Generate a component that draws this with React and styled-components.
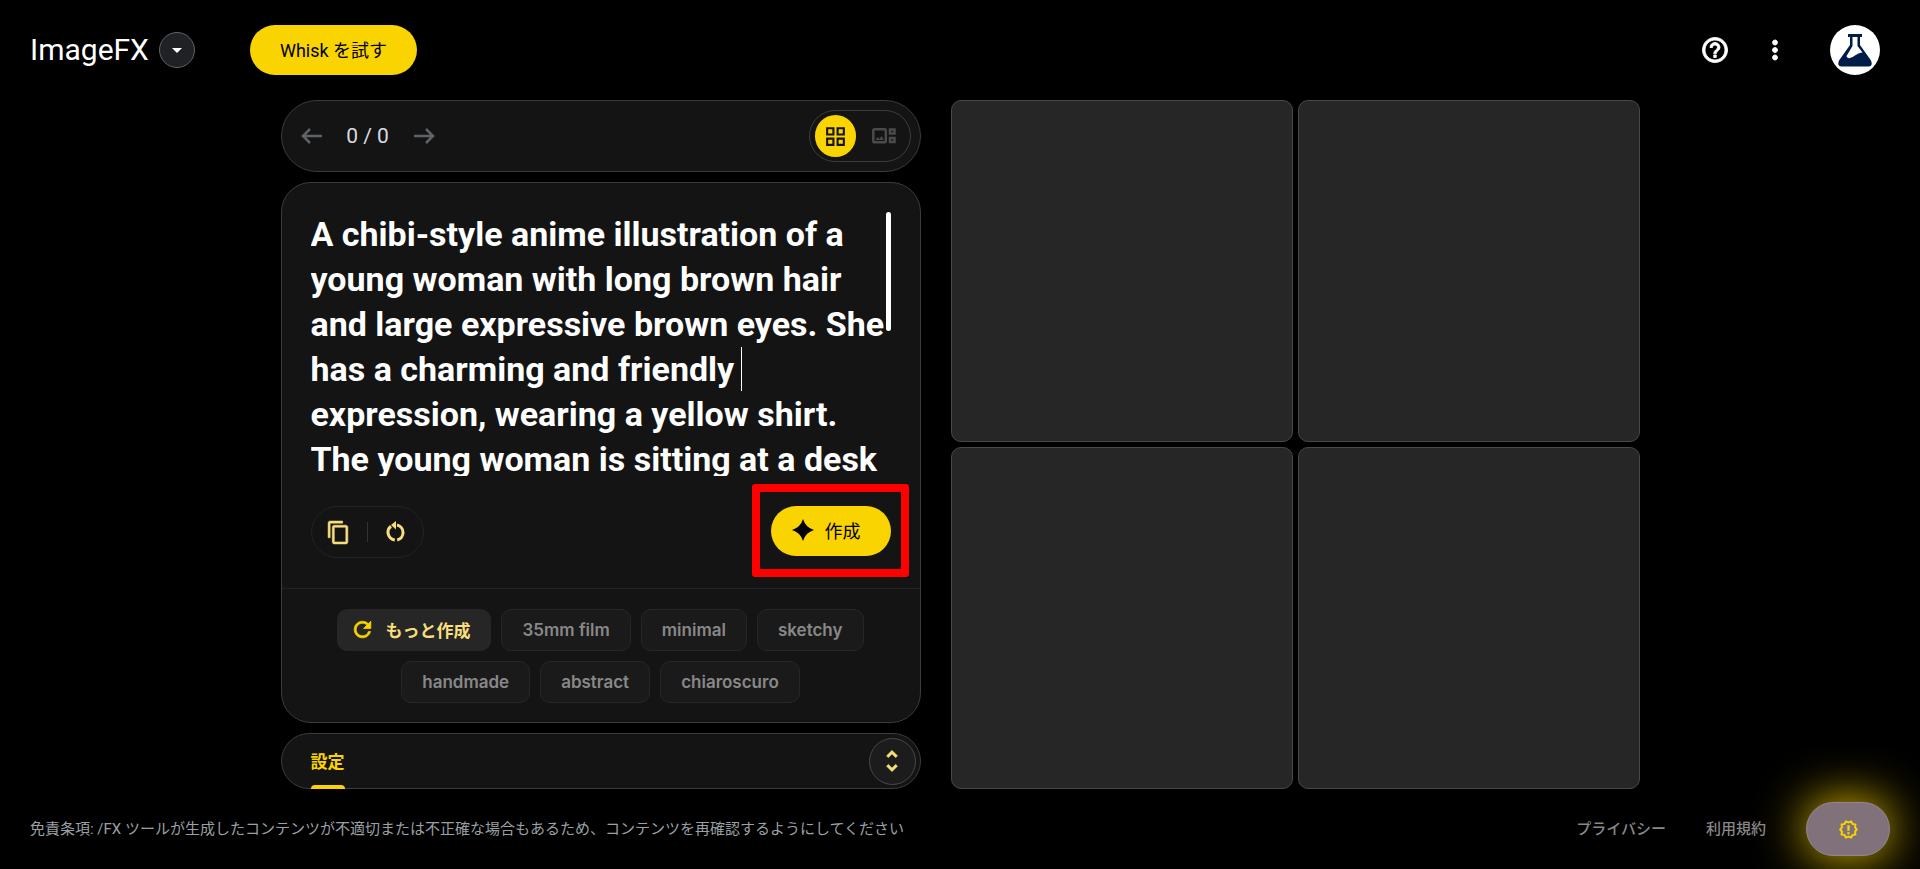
import React, { useState } from 'react';
import styled, { createGlobalStyle } from 'styled-components';
import {
  MdArrowDropDown,
  MdContentCopy,
  MdGridView,
  MdHelpOutline,
  MdMoreVert,
  MdRefresh,
  MdUnfoldMore,
} from 'react-icons/md';

const PROMPT = `A chibi-style anime illustration of a
young woman with long brown hair
and large expressive brown eyes. She
has a charming and friendly
expression, wearing a yellow shirt.
The young woman is sitting at a desk`;

const STYLES = ['35mm film', 'minimal', 'sketchy', 'handmade', 'abstract', 'chiaroscuro'];

const GlobalStyle = createGlobalStyle`
  * {
    box-sizing: border-box;
  }

  body {
    margin: 0;
    background-color: #000;
    color: #fff;
    font-family: Roboto, 'Noto Sans CJK JP', sans-serif;
  }

  button, textarea {
    font-family: inherit;
  }

  button {
    padding: 0;
    border: none;
    background: none;
    color: inherit;
    cursor: pointer;
  }

  path[fill='none'] {
    stroke: none;
  }
`;

const Page = styled.div`
  display: flex;
  flex-direction: column;
  min-height: 100vh;
`;

const Header = styled.header`
  display: flex;
  align-items: center;
  height: 100px;
  padding: 0 40px 0 30px;
`;

const Logo = styled.h1`
  margin: 0 10px 0 0;
  font-size: 30px;
  font-weight: 400;
  line-height: 36px;
`;

const ToolMenuButton = styled.button`
  display: flex;
  align-items: center;
  justify-content: center;
  width: 36px;
  height: 36px;
  margin-right: 55px;
  border: 1px solid #5f6368;
  border-radius: 50%;
  background-color: #202124;
`;

const PrimaryButton = styled.button`
  display: flex;
  align-items: center;
  gap: 11px;
  height: 50px;
  padding: ${props => (props.$withIcon ? '0 30px 2px 21px' : '0 30px 2px')};
  border-radius: 25px;
  background-color: #fad400;
  color: #000;
  font-size: 18px;
  font-weight: 400;
`;

const HeaderActions = styled.div`
  display: flex;
  align-items: center;
  gap: 30px;
  margin-left: auto;
`;

const IconButton = styled.button`
  display: flex;
  align-items: center;
  justify-content: center;
  width: 30px;
  height: 30px;
  color: ${props => props.$color || '#fff'};
`;

const Avatar = styled.button`
  width: 50px;
  height: 50px;
  margin-left: 10px;
  border-radius: 50%;
  background-color: #fff;
`;

const Workspace = styled.main`
  display: flex;
  flex: 1;
  justify-content: center;
  gap: 30px;
`;

const Editor = styled.section`
  display: flex;
  flex-direction: column;
  gap: 10px;
  flex: 0 1 640px;
`;

const Panel = styled.div`
  border: 1px solid #3c3c3c;
  border-radius: ${props => props.$radius};
  background-color: #141414;
`;

const Toolbar = styled(Panel)`
  display: flex;
  align-items: center;
  height: 72px;
  padding: 0 9px 0 15px;
`;

const ArrowButton = styled.button`
  display: flex;
  align-items: center;
  justify-content: center;
  width: 30px;
  height: 30px;
  color: #5f6368;
`;

const Counter = styled.span`
  width: 82px;
  color: #dadce0;
  font-size: 21px;
  text-align: center;
`;

const ViewToggle = styled.div`
  display: flex;
  align-items: center;
  gap: 8px;
  height: 52px;
  margin-left: auto;
  padding: 0 5px;
  border: 1px solid #3c3c3c;
  border-radius: 26px;
`;

const ViewButton = styled.button`
  display: flex;
  align-items: center;
  justify-content: center;
  width: 41px;
  height: 42px;
  border-radius: 21px;
  background-color: ${props => (props.$active ? '#fad400' : 'transparent')};
  color: ${props => (props.$active ? '#141414' : '#4a4a4a')};
`;

const PromptPanel = styled(Panel)`
  display: flex;
  flex: 1;
  flex-direction: column;
`;

const PromptArea = styled.div`
  position: relative;
  flex: 1;
  margin: 29px 29px 30px;
`;

const PromptInput = styled.textarea`
  display: block;
  width: 100%;
  height: 100%;
  min-height: 264px;
  padding: 0;
  border: none;
  outline: none;
  resize: none;
  overflow: hidden;
  background: none;
  color: #fff;
  font-size: 34px;
  font-weight: 700;
  line-height: 45px;
  white-space: pre;
`;

const ScrollThumb = styled.span`
  position: absolute;
  top: 0;
  right: 0;
  width: 5px;
  height: 45%;
  border-radius: 3px;
  background-color: #fff;
`;

const Caret = styled.span`
  position: absolute;
  top: 135px;
  left: 430px;
  width: 1px;
  height: 44px;
  background-color: #fff;
`;

const PromptActions = styled.div`
  display: flex;
  align-items: flex-start;
  justify-content: space-between;
  padding: 0 29px 30px;
`;

const EditTools = styled.div`
  display: flex;
  align-items: center;
  justify-content: space-between;
  width: 113px;
  height: 52px;
  padding: 0 12px;
  border: 1px solid #222;
  border-radius: 26px;
`;

const Separator = styled.span`
  width: 1px;
  height: 20px;
  background-color: #333;
`;

const Highlight = styled.div`
  position: relative;

  &::after {
    content: '';
    position: absolute;
    inset: -22px -18px -21px -19px;
    border: 8px solid #f00;
    border-radius: 3px;
    pointer-events: none;
  }
`;

const Suggestions = styled.div`
  display: flex;
  flex-wrap: wrap;
  justify-content: center;
  gap: 10px;
  padding: 20px 40px 19px;
  border-top: 1px solid #222;
`;

const Chip = styled.button`
  height: 42px;
  padding: 0 20px;
  border: 1px solid #262626;
  border-radius: 10px;
  background-color: #1a1a1a;
  color: #888;
  font-family: Inter, 'Noto Sans CJK JP', sans-serif;
  font-size: 17px;
  font-weight: 600;
`;

const MoreChip = styled(Chip)`
  display: flex;
  align-items: center;
  gap: 10px;
  padding: 0 20px 2px 12px;
  background-color: #262626;
  color: #f8df7b;
  font-weight: 700;

  svg {
    color: #fad400;
  }
`;

const SettingsBar = styled(Panel)`
  display: flex;
  align-items: center;
  justify-content: space-between;
  height: 56px;
  padding: 0 4px 0 29px;
`;

const SettingsTab = styled.button`
  position: relative;
  align-self: stretch;
  margin-bottom: -1px;
  padding-bottom: 3px;
  color: #fad400;
  font-size: 17px;
  font-weight: 700;

  &::after {
    content: '';
    position: absolute;
    right: 0;
    bottom: 0;
    left: 0;
    height: 4px;
    border-radius: 4px 4px 0 0;
    background-color: #fad400;
  }
`;

const ExpandButton = styled.button`
  display: flex;
  align-items: center;
  justify-content: center;
  width: 47px;
  height: 47px;
  border: 1px solid #484848;
  border-radius: 50%;
  background-color: #1c1c1c;
  color: #f8df7b;
`;

const ResultGrid = styled.section`
  display: grid;
  grid-template-columns: 1fr 1fr;
  grid-template-rows: 1fr 1fr;
  gap: 5px;
  flex: 0 1 689px;
`;

const ResultCell = styled.div`
  border: 1px solid #484848;
  border-radius: 10px;
  background-color: #262626;
`;

const Footer = styled.footer`
  display: flex;
  align-items: center;
  gap: 40px;
  height: 80px;
  padding: 0 30px;
  font-size: 15px;
`;

const Disclaimer = styled.p`
  margin: 0 auto 0 0;
  padding-bottom: 3px;
  color: #9aa0a6;
`;

const FooterLink = styled.a`
  padding-bottom: 3px;
  color: #888;
  font-weight: 500;
  text-decoration: none;
`;

const FeedbackButton = styled.button`
  display: flex;
  align-items: center;
  justify-content: center;
  width: 84px;
  height: 54px;
  border: 1px solid #958494;
  border-radius: 27px;
  background-color: #80717a;
  box-shadow: 0 0 50px #fad400;
  color: #fad400;
`;

const ArrowIcon = ({ forward }) => (
  <svg width="22" height="16" viewBox="0 0 22 16" fill="none" stroke="currentColor" strokeWidth="2.500" aria-hidden="true">
    <path d={forward ? 'M1 8h19M13 1l7 7-7 7' : 'M21 8H2M9 1L2 8l7 7'} stroke="currentColor" />
  </svg>
);

const FlaskIcon = () => (
  <svg width="50" height="50" viewBox="0 0 50 50" aria-hidden="true">
    <path d="M18 9h14v3h-2v8l11 15.500q2.500 6-3 6H12q-5.500 0-3-6L20 20v-8h-2z" fill="#001d4a" />
    <path d="M22.500 12h5v9l5 6.500c-5 .5-7 3-10 4.500-3 1.800-5.500 1.500-6-1L22.500 21z" fill="#fff" />
  </svg>
);

const ImageStripIcon = () => (
  <svg width="24" height="16" viewBox="0 0 24 16" fill="none" stroke="currentColor" strokeWidth="2.500" aria-hidden="true">
    <rect x="1.300" y="1.300" width="12.500" height="13" rx="1" />
    <rect x="18" y="1.500" width="4.500" height="4" />
    <rect x="18" y="10" width="4.500" height="4" />
    <path d="M3.500 12l2-3 2 2L9.500 8l2.500 4z" fill="currentColor" stroke="none" />
  </svg>
);

const ResetIcon = () => (
  <svg width="20" height="22" viewBox="0 0 20 22" fill="none" stroke="currentColor" aria-hidden="true">
    <g strokeWidth="3">
      <path d="M5 5.300A7.700 7.700 0 0 0 8.800 19M11.200 19A7.700 7.700 0 0 0 11 4" />
    </g>
    <path d="M10 0v8.500L5 4z" fill="currentColor" stroke="none" />
  </svg>
);

const SparkIcon = () => (
  <svg width="22" height="22" viewBox="0 0 22 22" fill="currentColor" aria-hidden="true">
    <path d="M11 0Q13.500 8.500 22 11Q13.500 13.500 11 22Q8.500 13.500 0 11Q8.500 8.500 11 0z" />
  </svg>
);

const NoticeIcon = () => (
  <svg width="19" height="19" viewBox="0 0 24 24" fill="none" stroke="currentColor" strokeWidth="2.500" aria-hidden="true">
    <path d="M12 3l3.300-1.200 1.800 3.100 3.600.8-.4 3.600L22.500 12l-2.200 2.700.4 3.600-3.600.8-1.800 3.100L12 21l-3.300 1.200-1.800-3.100-3.600-.8.400-3.600L1.500 12l2.200-2.700-.4-3.600 3.600-.8 1.800-3.100z" />
    <path d="M12 6.500v7M12 15.500V18" strokeWidth="3" />
  </svg>
);

const App = () => {
  const [prompt, setPrompt] = useState(PROMPT);
  const [view, setView] = useState('grid');

  return (
    <Page>
      <GlobalStyle />
      <Header>
        <Logo>ImageFX</Logo>
        <ToolMenuButton aria-label="ツールを切り替え">
          <MdArrowDropDown size={24} />
        </ToolMenuButton>
        <PrimaryButton>Whisk を試す</PrimaryButton>
        <HeaderActions>
          <IconButton aria-label="ヘルプ"><MdHelpOutline size={30} strokeWidth="0.7" /></IconButton>
          <IconButton aria-label="メニュー"><MdMoreVert size={30} strokeWidth="0.7" /></IconButton>
          <Avatar aria-label="アカウント"><FlaskIcon /></Avatar>
        </HeaderActions>
      </Header>

      <Workspace>
        <Editor>
          <Toolbar $radius="36px">
            <ArrowButton aria-label="前へ"><ArrowIcon /></ArrowButton>
            <Counter>0 / 0</Counter>
            <ArrowButton aria-label="次へ"><ArrowIcon forward /></ArrowButton>
            <ViewToggle>
              <ViewButton $active={view === 'grid'} onClick={() => setView('grid')} aria-label="グリッド">
                <MdGridView size={25} />
              </ViewButton>
              <ViewButton $active={view === 'strip'} onClick={() => setView('strip')} aria-label="ストリップ">
                <ImageStripIcon />
              </ViewButton>
            </ViewToggle>
          </Toolbar>

          <PromptPanel $radius="30px">
            <PromptArea>
              <PromptInput
                aria-label="プロンプト"
                spellCheck={false}
                value={prompt}
                onChange={e => setPrompt(e.target.value)}
              />
              <Caret />
              <ScrollThumb />
            </PromptArea>
            <PromptActions>
              <EditTools>
                <IconButton $color="#f8df7b" aria-label="コピー"><MdContentCopy size={25} strokeWidth="0.5" /></IconButton>
                <Separator />
                <IconButton $color="#f8df7b" aria-label="リセット"><ResetIcon /></IconButton>
              </EditTools>
              <Highlight>
                <PrimaryButton $withIcon>
                  <SparkIcon />
                  作成
                </PrimaryButton>
              </Highlight>
            </PromptActions>
            <Suggestions>
              <MoreChip>
                <MdRefresh size={25} strokeWidth="0.7" />
                もっと作成
              </MoreChip>
              {STYLES.map(name => <Chip key={name}>{name}</Chip>)}
            </Suggestions>
          </PromptPanel>

          <SettingsBar $radius="28px">
            <SettingsTab>設定</SettingsTab>
            <ExpandButton aria-label="設定を開く"><MdUnfoldMore size={28} strokeWidth="0.7" /></ExpandButton>
          </SettingsBar>
        </Editor>

        <ResultGrid>
          <ResultCell />
          <ResultCell />
          <ResultCell />
          <ResultCell />
        </ResultGrid>
      </Workspace>

      <Footer>
        <Disclaimer>
          免責条項: /FX ツールが生成したコンテンツが不適切または不正確な場合もあるため、コンテンツを再確認するようにしてください
        </Disclaimer>
        <FooterLink href="#privacy">プライバシー</FooterLink>
        <FooterLink href="#terms">利用規約</FooterLink>
        <FeedbackButton aria-label="フィードバック"><NoticeIcon /></FeedbackButton>
      </Footer>
    </Page>
  );
};

export default App;
